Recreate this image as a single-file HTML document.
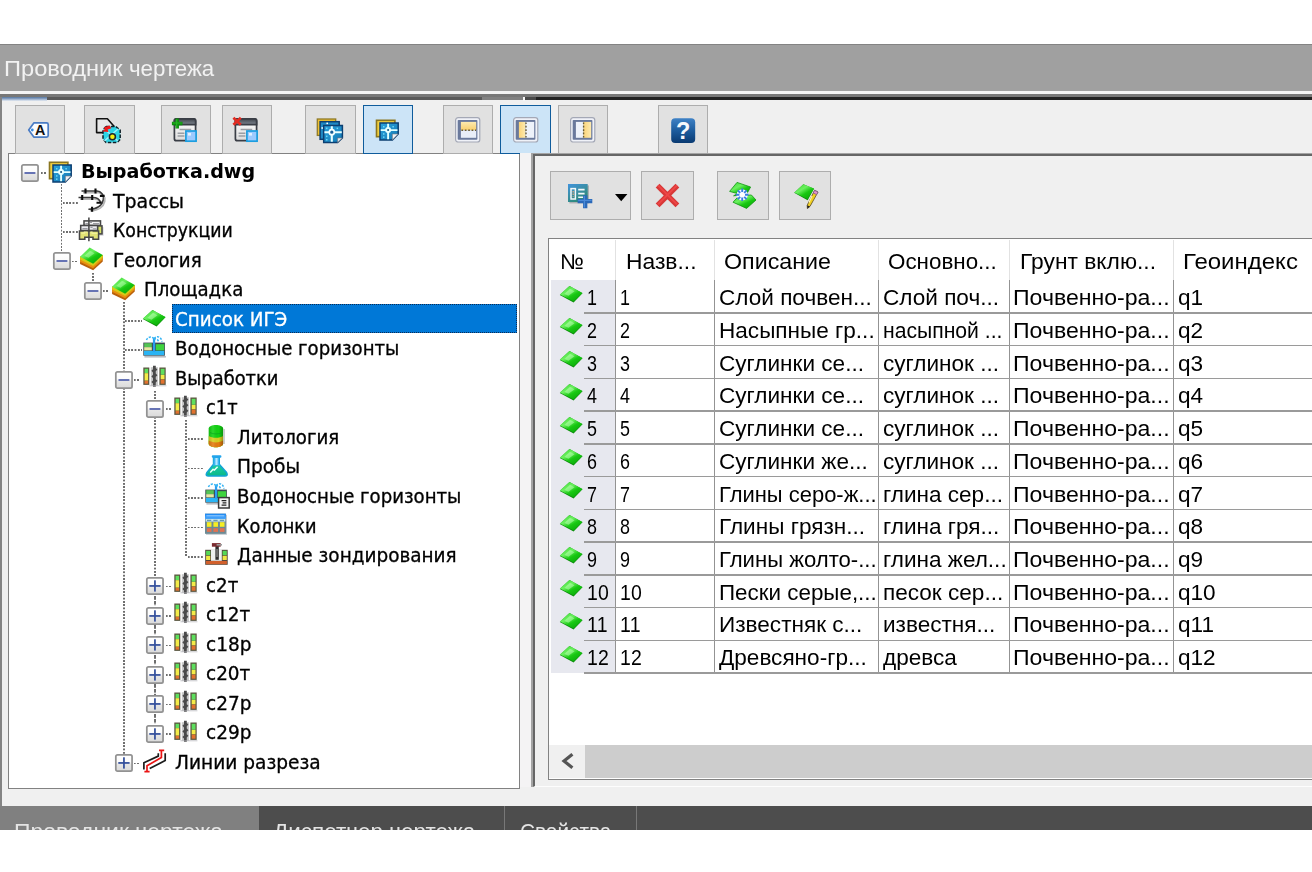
<!DOCTYPE html>
<html lang="ru"><head><meta charset="utf-8"><title>Проводник чертежа</title>
<style>
html,body{margin:0;padding:0;background:#fff;}
body{width:1312px;height:872px;overflow:hidden;position:relative;font-family:"Liberation Sans",sans-serif;}
#app{position:absolute;left:0;top:0;width:1312px;height:872px;overflow:hidden;}
.a{position:absolute;}
.ic{position:absolute;overflow:visible;}
.ph{position:absolute;background:#7a9;}
.vd2{position:absolute;background:repeating-linear-gradient(to bottom,#6e6e6e 0,#6e6e6e 3.4px,rgba(110,110,110,0) 3.9px,rgba(110,110,110,0) 4.5px,#6e6e6e 4.92px);width:1.7px;}
.t{position:absolute;white-space:nowrap;transform-origin:0 50%;line-height:1;display:block;}
.tt{font-family:"Liberation Sans",sans-serif;font-size:21.6px;color:#f2f2f2;}
.tr{font-family:"DejaVu Sans Condensed","DejaVu Sans",sans-serif;font-size:19.6px;font-stretch:condensed;color:#000;-webkit-text-stroke:0.3px currentColor;}
.trb{font-family:"DejaVu Sans Condensed","DejaVu Sans",sans-serif;font-weight:bold;font-stretch:condensed;font-size:19.6px;color:#000;}
.tb{font-family:"Liberation Sans",sans-serif;font-size:21.6px;color:#000;}
.tab{font-family:"Liberation Sans",sans-serif;font-size:21.6px;color:#e4e4e4;}
.btn{position:absolute;box-sizing:border-box;background:#e1e1e1;border:1.5px solid #adadad;}
.btn.on{background:#cce4f7;border:1.8px solid #0f5c9c;}
.hd{position:absolute;background:repeating-linear-gradient(to right,#6e6e6e 0,#6e6e6e 1.3px,rgba(110,110,110,0) 1.9px,rgba(110,110,110,0) 2.7px,#6e6e6e 3.28px);height:1.7px;}
.vd{position:absolute;background:repeating-linear-gradient(to bottom,#6e6e6e 0,#6e6e6e 1.3px,rgba(110,110,110,0) 1.9px,rgba(110,110,110,0) 2.7px,#6e6e6e 3.28px);width:1.7px;}
</style></head>
<body>
<svg width="0" height="0" style="position:absolute">
<defs>
<linearGradient id="gBox" x1="0" y1="0" x2="0" y2="1"><stop offset="0" stop-color="#ffffff"/><stop offset="0.42" stop-color="#fbfbfb"/><stop offset="0.58" stop-color="#e6e6e6"/><stop offset="1" stop-color="#dadada"/></linearGradient>
<linearGradient id="gGreen" x1="0.1" y1="0" x2="0.9" y2="1"><stop offset="0" stop-color="#38d830"/><stop offset="0.35" stop-color="#6cf060"/><stop offset="0.6" stop-color="#18c812"/><stop offset="1" stop-color="#08a008"/></linearGradient>
<linearGradient id="gHelp" x1="0" y1="0" x2="0" y2="1"><stop offset="0" stop-color="#3f82c6"/><stop offset="0.5" stop-color="#1c5c9e"/><stop offset="1" stop-color="#0a3a72"/></linearGradient>
<linearGradient id="gYel" x1="0" y1="0" x2="0" y2="1"><stop offset="0" stop-color="#fdeab0"/><stop offset="1" stop-color="#f9cf6c"/></linearGradient>
<linearGradient id="gYelH" x1="0" y1="0" x2="1" y2="0"><stop offset="0" stop-color="#fbd47a"/><stop offset="1" stop-color="#fdeab0"/></linearGradient>
<linearGradient id="gTeal" x1="0" y1="0" x2="0.6" y2="1"><stop offset="0" stop-color="#3f93dc"/><stop offset="0.5" stop-color="#3b8fa8"/><stop offset="1" stop-color="#2a8a72"/></linearGradient>
<linearGradient id="gBlueSq" x1="0" y1="0" x2="1" y2="1"><stop offset="0" stop-color="#2aa2dc"/><stop offset="1" stop-color="#1479b4"/></linearGradient>
<linearGradient id="gWinHd" x1="0" y1="0" x2="0" y2="1"><stop offset="0" stop-color="#41464e"/><stop offset="1" stop-color="#808892"/></linearGradient>
<linearGradient id="gWinBd" x1="0" y1="0" x2="0" y2="1"><stop offset="0" stop-color="#ffffff"/><stop offset="1" stop-color="#dcdcdc"/></linearGradient>
<linearGradient id="gCyl" x1="0" y1="0" x2="1" y2="0"><stop offset="0" stop-color="#000" stop-opacity="0.12"/><stop offset="0.3" stop-color="#fff" stop-opacity="0.12"/><stop offset="0.7" stop-color="#000" stop-opacity="0"/><stop offset="1" stop-color="#000" stop-opacity="0.3"/></linearGradient>
<linearGradient id="gFlask" x1="0" y1="0" x2="0" y2="1"><stop offset="0" stop-color="#20d8b8"/><stop offset="1" stop-color="#0cb888"/></linearGradient>
<linearGradient id="gColHd" x1="0" y1="0" x2="0" y2="1"><stop offset="0" stop-color="#1c86f0"/><stop offset="1" stop-color="#4aa8ff"/></linearGradient>
<filter id="soft" x="-20%" y="-20%" width="140%" height="140%"><feGaussianBlur stdDeviation="0.45"/></filter>

<!-- expand boxes 17x17 -->
<symbol overflow="visible" id="bx-minus" viewBox="0 0 17.4 17.4"><rect x="0.8" y="0.8" width="15.8" height="15.8" rx="1.6" fill="url(#gBox)" stroke="#929292" stroke-width="1.7"/><rect x="3.4" y="7.9" width="10.6" height="1.7" fill="#5362ac"/></symbol>
<symbol overflow="visible" id="bx-plus" viewBox="0 0 17.4 17.4"><rect x="0.8" y="0.8" width="15.8" height="15.8" rx="1.6" fill="url(#gBox)" stroke="#929292" stroke-width="1.7"/><rect x="3.2" y="7.85" width="11" height="1.7" fill="#34509c"/><rect x="7.85" y="3.2" width="1.7" height="11" fill="#34509c"/></symbol>

<!-- dwg icon, px units -->
<symbol overflow="visible" id="i-dwg" viewBox="0 0 26.24 26.24">
<rect x="1.5" y="2.3" width="18.4" height="16.4" fill="#f2d040" stroke="#8a7620" stroke-width="1.6"/>
<path d="M5 5.1 H23.2 V16 L17.4 21.9 H5 Z" fill="url(#gBlueSq)" stroke="#0c3f72" stroke-width="1.5"/>
<path d="M17.4 21.9 V16 H23.2 Z" fill="#eef1f5" stroke="#70767e" stroke-width="0.6"/>
<path d="M13.1 5.8 V21.2 M5.7 12.1 H22.5" stroke="#e0ffff" stroke-width="1.9"/>
<circle cx="13.1" cy="12.1" r="2.2" fill="#dff" stroke="#e8ffff" stroke-width="1.6"/><circle cx="13.1" cy="12.1" r="1" fill="#14507e"/>
<g fill="#6fd8f8"><rect x="8" y="8" width="1.5" height="1.5"/><rect x="17.4" y="8" width="1.5" height="1.5"/><rect x="8" y="15.2" width="1.5" height="1.5"/><rect x="8" y="18.4" width="1.5" height="1.5"/></g>
</symbol>

<symbol overflow="visible" id="i-diamond" viewBox="0 0 26.24 26.24">
<path d="M0.8 12 L10.5 3 L23.5 10.3 L14.6 19.5 Z" fill="#0a8a0a"/>
<path d="M0.9 11.6 L10.5 3 L23.5 10 L14.7 18.4 Z" fill="url(#gGreen)"/>
<path d="M5.5 11 L11 5.8 L15.5 8.2 L9.5 12.8 Z" fill="#b8ffb0" opacity="0.55" filter="url(#soft)"/>
</symbol>

<symbol overflow="visible" id="i-geo" viewBox="0 0 26.24 26.24">
<path d="M1.06 8.8 V15.9 L14.16 22.3 L23.76 13.5 V7.1 Z" fill="#b8600c"/>
<path d="M1.06 8.8 V13.8 L14.16 20.2 L23.76 11.6 V7.1 Z" fill="#e8900e"/>
<path d="M1.06 8.8 V11.5 L14.16 17.9 L23.76 9.4 V7.1 Z" fill="#d4cc18"/>
<path d="M1.06 8.8 L10.66 -0.5 L23.76 7.1 L14.16 15.7 Z" fill="url(#gGreen)"/>
<path d="M5.5 8 L11 2.8 L15.5 5.2 L9.5 9.8 Z" fill="#b8ffb0" opacity="0.5" filter="url(#soft)"/>
</symbol>

<symbol overflow="visible" id="i-trass" viewBox="0 0 26.24 26.24">
<g fill="none" stroke="#a8a8a8" stroke-width="1.7" transform="translate(1.5,1.5)" opacity="0.85">
<path d="M18 2.05 C22 2.2 25.4 6 24.2 11 C23.2 15.5 19 20.25 9.4 20.25"/><path d="M13.9 8.55 C17.5 8.6 20.5 10.5 21.5 13.35"/><path d="M2.5 2.05 H18 M-0.5 8.55 H13.9"/>
</g>
<g fill="none" stroke="#3c3c3c" stroke-width="1.5">
<path d="M2.5 2.05 H18 C22 2.2 25.4 6 24.2 11 C23.2 15.5 19 20.25 9.4 20.25"/>
<path d="M-0.5 8.55 H13.9 C17.5 8.6 20.5 10.5 21.5 13.35"/>
</g>
<g fill="none" stroke="#0c0c0c" stroke-width="2.1">
<path d="M6.5 -0.4 V4.6 M16.5 -0.4 V4.6 M3.2 6.1 V11.1 M13.2 6.1 V11.1 M13.1 17.7 V22.7 M20.9 6.85 H25.6 M17.5 13.75 H22.5"/>
</g>
</symbol>

<symbol overflow="visible" id="i-constr" viewBox="0 0 26.24 26.24">
<rect x="20.6" y="8.2" width="4" height="8.6" fill="#a8a8b4" opacity="0.45"/>
<g stroke="#474747" stroke-width="1.55">
<rect x="5" y="1.9" width="16.5" height="4.6" fill="#f2f2f2"/>
<rect x="1.7" y="6.5" width="17" height="5" fill="#ececf0"/>
<rect x="18.7" y="6.9" width="4.3" height="8" fill="#d6e06a"/>
<path d="M0.5 12 H19.6 V20.2 H14 V18.2 H5.8 V20.2 H0.5 Z" fill="#e2e274"/>
<path d="M9.9 -1.6 V22.2" fill="none"/>
</g>
<path d="M6.4 4.6 H9 M11 3.4 H13 M14 4.6 H20 M3.4 9.6 H8.6 M11.4 8.4 H13.6 M13.8 9.8 H17.4" stroke="#9a9aa0" stroke-width="1.3"/>
<path d="M2.2 14.2 H5.4 V13.2 H8.6 M11.4 13.2 H13 V14.4 H18.4" stroke="#f0f09a" stroke-width="1.2" fill="none"/>
</symbol>

<symbol overflow="visible" id="i-water" viewBox="0 0 26.24 26.24">
<rect x="2.4" y="19" width="21.5" height="1.6" fill="#9aa0a8" opacity="0.7"/>
<rect x="1.3" y="5.6" width="21.6" height="13.1" fill="#3c4a52"/>
<rect x="2.2" y="6.2" width="7.6" height="4" fill="#54c454"/><rect x="2.2" y="10.2" width="7.6" height="3.2" fill="#e6e8a0"/>
<rect x="13.8" y="7.2" width="8.4" height="6.2" fill="#3ed43e"/>
<rect x="2" y="13.9" width="20.2" height="4.2" fill="#2ab4f4"/>
<rect x="10.9" y="1.2" width="2.3" height="13.5" fill="#2a9cf0"/>
<g fill="none" stroke="#36b4f4" stroke-width="1.5" stroke-dasharray="2.2 1.3">
<path d="M12 1.6 C9 -1.4 5 0.4 4.2 3.8"/><path d="M12 1.6 C15 -2 19.5 0 20 4.6"/><path d="M12 2.6 C13.6 1 16 2 16.4 4.4"/>
</g>
</symbol>

<symbol overflow="visible" id="i-water2" viewBox="0 0 26.24 26.24">
<use href="#i-water"/>
<rect x="14.6" y="13.6" width="10.6" height="10.4" fill="#f4f4f4" stroke="#3a3a3a" stroke-width="1.5"/>
<path d="M17.6 16.6 H22.4 M18.6 18.9 H22.4 M17.6 21.2 H22.4" stroke="#222" stroke-width="1.3"/>
</symbol>

<symbol overflow="visible" id="i-bore" viewBox="0 0 26.24 26.24">
<rect x="1.3" y="1.5" width="6" height="17.4" fill="#5a5640"/>
<rect x="2.6" y="2.8" width="3.5" height="4.2" fill="#5ee05e"/><rect x="2.6" y="7.2" width="3.5" height="7.4" fill="#f4ec48"/><rect x="2.6" y="14.8" width="3.5" height="2.9" fill="#e2722e"/>
<rect x="17.4" y="1.5" width="6.3" height="17.4" fill="#5a5640"/>
<rect x="18.7" y="2.8" width="3.8" height="5.9" fill="#5ee05e"/><rect x="18.7" y="8.9" width="3.8" height="4.4" fill="#f4ec48"/><rect x="18.7" y="13.6" width="3.8" height="4.1" fill="#e2722e"/>
<rect x="8.8" y="1.2" width="2.3" height="18.6" fill="#c8c8c8"/><rect x="13.6" y="1.2" width="2.3" height="18.6" fill="#c8c8c8"/>
<path d="M11 -0.2 H13.8 V2 L15.4 3.6 L13.8 5.2 V7.6 L15.4 9.2 L13.8 10.8 V13.2 L15.4 14.8 L13.8 16.4 V20.8 H11 V17.6 L9.4 16 L11 14.4 V12 L9.4 10.4 L11 8.8 V6.4 L9.4 4.8 L11 3.2 Z" fill="#4a4a4a"/>
<rect x="7.4" y="19" width="17" height="1.4" fill="#b0b0b6" opacity="0.5"/>
</symbol>

<symbol overflow="visible" id="i-litho" viewBox="0 0 26.24 26.24">
<path d="M4.7 3.6 C4.7 -1.2 19.1 -1.2 19.1 3.6 V18.8 C19.1 23.4 4.7 23.4 4.7 18.8 Z" fill="#12d212"/>
<path d="M4.7 11 C8 13.4 16 13.4 19.1 11 V18.8 C19.1 23.4 4.7 23.4 4.7 18.8 Z" fill="#d6d020"/>
<path d="M4.7 15.6 C8 18 16 18 19.1 15.6 V18.8 C19.1 23.4 4.7 23.4 4.7 18.8 Z" fill="#e47c10"/>
<path d="M4.7 3.6 C4.7 -1.2 19.1 -1.2 19.1 3.6 V18.8 C19.1 23.4 4.7 23.4 4.7 18.8 Z" fill="url(#gCyl)"/>
<path d="M6 7.6 C9 9.4 15 9.4 18 7.6" fill="none" stroke="#0a9a20" stroke-width="1" opacity="0.6"/>
<rect x="19.3" y="4" width="1.6" height="15" fill="#9a9aa0" opacity="0.55"/>
</symbol>

<symbol overflow="visible" id="i-flask" viewBox="0 0 26.24 26.24">
<path d="M9.6 2.6 H15.2 V9.2 L22.6 17.6 C24 20 22.6 21 21 21 H4.4 C2.6 21 1.6 20 2.8 17.8 L9.6 9.2 Z" fill="url(#gFlask)" stroke="#12a4d4" stroke-width="1.6" stroke-linejoin="round"/>
<path d="M9.6 2.6 H15.2 V9.2 L16.4 10.6 H8.6 L9.6 9.2 Z" fill="#3cb4f4"/>
<rect x="11.4" y="3" width="2.2" height="7" fill="#b4e8ff"/>
<rect x="7.8" y="0.2" width="9.6" height="2.6" rx="1" fill="#22a4ec"/>
<path d="M6.2 17.4 L9 14.4 L10.4 15 L13.6 11.8" fill="none" stroke="#e8fffa" stroke-width="1.5"/>
</symbol>

<symbol overflow="visible" id="i-columns" viewBox="0 0 26.24 26.24">
<rect x="2" y="0.8" width="21" height="20" fill="#9aa4ac" opacity="0.6"/>
<rect x="1" y="-0.3" width="20.9" height="20.1" fill="#6c8a94"/>
<rect x="1" y="-0.3" width="20.9" height="5.2" fill="url(#gColHd)"/>
<rect x="2.4" y="1.2" width="18" height="1.2" fill="#8cc8ff"/>
<rect x="1.6" y="5" width="19.7" height="2.6" fill="#c8e4ee"/>
<path d="M3 6.3 H7.2 M9.4 6.3 H13.6 M15.8 6.3 H20" stroke="#6a9aa8" stroke-width="1.2"/>
<g fill="#f6ee24"><rect x="2.9" y="8.2" width="4.6" height="4.6"/><rect x="9.4" y="8.2" width="4.6" height="4.6"/><rect x="15.9" y="8.2" width="4.6" height="4.6"/></g>
<g fill="#e07252"><rect x="2.9" y="14.2" width="4.6" height="3.7"/><rect x="9.4" y="14.2" width="4.6" height="3.7"/><rect x="15.9" y="14.2" width="4.6" height="3.7"/></g>
</symbol>

<symbol overflow="visible" id="i-sond" viewBox="0 0 26.24 26.24">
<rect x="1.2" y="6.8" width="22.5" height="15" fill="#54463c"/>
<rect x="7" y="6.2" width="10.8" height="11.6" fill="#eef0f0"/>
<rect x="2.1" y="7.8" width="4.2" height="4.4" fill="#56d856"/><rect x="2.1" y="12.8" width="4.2" height="4.2" fill="#f0e844"/>
<rect x="18.6" y="7.8" width="4.2" height="4.4" fill="#56d856"/><rect x="18.6" y="12.8" width="4.2" height="4.2" fill="#f0e844"/>
<rect x="2" y="18" width="20.9" height="3.2" fill="#d2602c"/>
<rect x="11.4" y="1.8" width="3.4" height="15" fill="#2e2e2e"/><rect x="12.4" y="6" width="1.3" height="8" fill="#8a8a8a"/>
<rect x="7.9" y="0.1" width="8.8" height="3.6" fill="#7c2c30"/><rect x="12.6" y="1" width="5.4" height="1.6" fill="#9a9a9a"/>
</symbol>

<symbol overflow="visible" id="i-section" viewBox="0 0 26.24 26.24">
<g fill="none" stroke="#1c1c1c" stroke-width="1.7"><path d="M1.9 19.4 V12.7 L16.3 6.1 V3.2"/><path d="M7.7 18.5 L23.2 10.6 V3.2"/></g>
<g fill="none" stroke="#ea1414" stroke-width="1.7"><path d="M2.4 21.6 H7.6 M5 21.6 V15.8 L19.4 7.5 V0.3 M17 0.3 H22.2"/></g>
</symbol>

<!-- toolbar icons -->

<symbol overflow="visible" id="t2" viewBox="0 0 26.24 26.24">
<path d="M0.6 1.8 H11.4 L18 9.2 V15.6 H0.6 Z" fill="#e8e8e8" stroke="#111" stroke-width="1.6" stroke-linejoin="round"/>
<path d="M10 9.4 H19.5 L24.2 13 V22.5 L21 25.4 H10 L7 22 V13 Z" fill="#2cd4e6" stroke="#102028" stroke-width="1.5" stroke-dasharray="3.4 1.6"/>
<path d="M8.5 12 L22 24 M22 12 L8.5 24" stroke="#9af2fa" stroke-width="1.6"/>
<circle cx="16.4" cy="19.7" r="3" fill="#f4f010" stroke="#20282c" stroke-width="1.5"/>
<path d="M13.6 8.4 L15.4 11.2 L11.6 12.4 L12.4 15 L6.6 14.6 L8.8 12 L7.8 10.6 Z" fill="#f01818"/>
</symbol>

<symbol overflow="visible" id="t-win" viewBox="0 0 26.24 26.24">
<rect x="1.4" y="1.9" width="21.2" height="21.8" rx="2" fill="url(#gWinBd)" stroke="#3a3e46" stroke-width="1.7"/>
<path d="M1.4 7.7 V3.9 Q1.4 1.9 3.4 1.9 H20.6 Q22.6 1.9 22.6 3.9 V7.7 Z" fill="url(#gWinHd)" stroke="#3a3e46" stroke-width="1.7"/>
<path d="M6.6 12.4 H18.2 M4.6 16.3 H11.4 M4.6 19 H11.4" stroke="#9a9ea4" stroke-width="1.5"/>
<rect x="12.9" y="14" width="10.2" height="10.2" fill="#9ccaff" stroke="#1c9ee0" stroke-width="1.7"/>
<rect x="15" y="16" width="3" height="2.6" fill="#e0f0ff"/>
</symbol>
<symbol overflow="visible" id="t3" viewBox="0 0 26.24 26.24"><use href="#t-win"/>
<path d="M-1.1 6.6 H9.5 M4.2 1.6 V11.6" stroke="#0c8c0c" stroke-width="3.5"/><path d="M-0.5 6 H8.9 M3.7 2.2 V11" stroke="#26b426" stroke-width="1.2"/>
</symbol>
<symbol overflow="visible" id="t4" viewBox="0 0 26.24 26.24"><use href="#t-win"/>
<path d="M-0.6 0.8 L6.8 7.8 M6.8 0.8 L-0.6 7.8" stroke="#e22c22" stroke-width="2.7"/>
</symbol>

<symbol overflow="visible" id="t5" viewBox="0 0 28 26.24">
<rect x="1.3" y="1" width="18.4" height="16.4" fill="#f0c030" stroke="#8f7a28" stroke-width="1.3"/>
<rect x="4.1" y="3.7" width="19.1" height="17.6" fill="#1f8ac4" stroke="#0c3f72" stroke-width="1.5"/>
<rect x="5.4" y="9.2" width="1.6" height="1.6" fill="#fff"/><rect x="10.4" y="4.6" width="1.6" height="1.6" fill="#fff"/>
<path d="M7.7 7.5 H26.4 V20 L21.6 24.4 H7.7 Z" fill="url(#gBlueSq)" stroke="#0c3f72" stroke-width="1.5"/>
<path d="M21.6 24.4 V20 H26.4 Z" fill="#e4e8ee" stroke="#70767e" stroke-width="0.6"/>
<path d="M15.8 8.2 V23.8 M8.4 14.2 H25.8" stroke="#e8ffff" stroke-width="2.1"/>
<circle cx="15.8" cy="14.2" r="2.5" fill="#1a5f98" stroke="#f4ffff" stroke-width="1.7"/>
<g fill="#6fd8f8"><rect x="10" y="9.6" width="1.5" height="1.5"/><rect x="20.6" y="9.6" width="1.5" height="1.5"/><rect x="10" y="17.6" width="1.5" height="1.5"/><rect x="10" y="21" width="1.5" height="1.5"/></g>
</symbol>

<symbol overflow="visible" id="t-lay" viewBox="0 0 25.4 25.6">
<rect x="0.6" y="0.6" width="24.2" height="24.4" rx="2.6" fill="#f0f2f8" stroke="#a4a8b6" stroke-width="1.2"/>
<rect x="2.7" y="3" width="19.7" height="19.7" rx="0.8" fill="#6a799c"/>
</symbol>
<symbol overflow="visible" id="t7" viewBox="0 0 25.4 25.6"><use href="#t-lay"/>
<rect x="5.9" y="4.9" width="15.3" height="8.3" fill="url(#gYel)"/><rect x="5.9" y="13.2" width="15.3" height="7.6" fill="#e9eef8"/>
<path d="M6.4 13.3 H21" stroke="#6a5c34" stroke-width="1.4" stroke-dasharray="1.7 1.7"/>
</symbol>
<symbol overflow="visible" id="t8" viewBox="0 0 25.4 25.6"><use href="#t-lay"/>
<rect x="5.9" y="4.9" width="6.6" height="15.9" fill="url(#gYelH)"/><rect x="12.5" y="4.9" width="8.7" height="15.9" fill="#eef2fa"/>
<path d="M13 5.4 V20.6" stroke="#6a5c34" stroke-width="1.4" stroke-dasharray="1.7 1.7"/>
</symbol>
<symbol overflow="visible" id="t9" viewBox="0 0 25.4 25.6"><use href="#t-lay"/>
<rect x="5.9" y="4.9" width="7.6" height="15.9" fill="#eef2fa"/><rect x="13.5" y="4.9" width="7.7" height="15.9" fill="url(#gYelH)"/>
<path d="M13.6 5.4 V20.6" stroke="#6a5c34" stroke-width="1.4" stroke-dasharray="1.7 1.7"/>
</symbol>


<symbol overflow="visible" id="r1" viewBox="0 0 26 26">
<rect x="1.4" y="1.4" width="19.6" height="18" fill="#7a8088" opacity="0.5"/>
<rect x="0" y="0" width="19.7" height="18" fill="url(#gTeal)"/>
<rect x="3" y="4.6" width="4.4" height="10.4" fill="none" stroke="#f2f8fa" stroke-width="1.5"/>
<path d="M5.2 7 V13" stroke="#e8a878" stroke-width="1.2" stroke-dasharray="1.4 1.2"/>
<path d="M10.2 5.6 H16.6 M10.2 9.6 H16.6 M10.2 13.2 H16.6" stroke="#f2f8fa" stroke-width="1.6"/>
<path d="M9.6 17.2 H24.3 M17.2 11.3 V24.3" stroke="#2a68b8" stroke-width="4.3"/>
<path d="M10.2 16.4 H23.6 M16.4 12 V23.6" stroke="#4a8ad8" stroke-width="1.3"/>
</symbol>

<symbol overflow="visible" id="r2" viewBox="0 0 23 23">
<path d="M1.6 1.6 L21.4 21.4 M21.4 1.6 L1.6 21.4" stroke="#d83838" stroke-width="5.4"/>
<path d="M2 1.4 L21 20.4 M21 1.4 L2 20.4" stroke="#ee4646" stroke-width="2"/>
</symbol>

<symbol overflow="visible" id="r3" viewBox="0 0 27 27">
<path d="M0.6 9.4 L8 0.4 L21.6 5 L17.4 12.6 L4.6 13.8 L8.6 11.6 Z" fill="url(#gGreen)" stroke="#0e960e" stroke-width="0.8"/>
<path d="M4 20.2 L10.2 13.6 L22.4 13 L27 18 L17.6 26.4 Z" fill="url(#gGreen)" stroke="#0e960e" stroke-width="0.8"/>
<circle cx="13.2" cy="12.8" r="5.6" fill="#f4fbff"/>
<g stroke="#3a7ce4" stroke-width="1.9"><path d="M13.2 6.6 V10 M13.2 15.6 V19 M7 12.8 H10.4 M16 12.8 H19.4 M8.8 8.4 L11.2 10.8 M15.2 14.8 L17.6 17.2 M17.6 8.4 L15.2 10.8 M11.2 14.8 L8.8 17.2"/></g>
<circle cx="13.2" cy="12.8" r="2.2" fill="#ffffff"/>
</symbol>

<symbol overflow="visible" id="r4" viewBox="0 0 26 26">
<path d="M0.2 8.8 L9.4 0.2 L20 4.8 L13.6 16.2 Z" fill="#0a8a0a"/>
<path d="M0.4 8.4 L9.4 0.2 L20 4.6 L13.6 15.2 Z" fill="url(#gGreen)"/>
<path d="M20.6 6.4 L24 8 L16 22.4 L13.4 24.6 L13.2 21.2 Z" fill="#f2d020" stroke="#6a5a30" stroke-width="0.9"/>
<path d="M20.6 6.4 L24 8 L22.6 10.6 L19.2 9 Z" fill="#e690cc" stroke="#7a5a8a" stroke-width="0.8"/>
<path d="M13.2 21.2 L16 22.4 L13.4 24.6 Z" fill="#222"/>
<path d="M18 12 L15 18.6" stroke="#fff8b0" stroke-width="1.1"/>
</symbol>
</defs>
</svg>

<div id="app">
<div class="a" style="left:0;top:44.3px;width:1312px;height:785.5px;background:#f0f0f0"></div>
<div class="a" style="left:0;top:44.3px;width:1312px;height:47.2px;background:#a0a0a0;border-top:1.9px solid #838383;box-sizing:border-box"></div>
<span id="title" class="t tt" style="left:3.6px;top:57.83px;transform:scaleX(1.0944);">Проводник</span>
<span id="title2" class="t tt" style="left:129.2px;top:57.83px;transform:scaleX(1.0313);">чертежа</span>
<div class="a" style="left:0;top:91.4px;width:1312px;height:2.8px;background:#f4f4f4"></div>
<div class="a" style="left:0;top:94.1px;width:1312px;height:2.8px;background:#787878"></div>
<div class="a" style="left:0;top:96.8px;width:1312px;height:3.1px;background:#5a5a5a"></div>
<div class="a" style="left:1.5px;top:96.6px;width:45.5px;height:4.4px;background:linear-gradient(#57779f,#8aa2c4 45%,#e6ecf3)"></div>
<div class="a" style="left:482px;top:96.8px;width:41.5px;height:3.1px;background:#828282"></div>
<div class="a" style="left:523.2px;top:96.6px;width:1.7px;height:4.4px;background:#f6f6f6"></div>
<div class="a" style="left:525px;top:96.8px;width:11px;height:3.1px;background:#4a4a4a"></div>
<div class="a" style="left:536px;top:96.8px;width:776px;height:3.1px;background:#222"></div>
<div class="a" style="left:0;top:97px;width:1.6px;height:709px;background:#848484"></div>
<div class="a" style="left:8.2px;top:152.8px;width:512.1px;height:636px;box-sizing:border-box;background:#fff;border:1.9px solid #828282"></div>
<div class="btn" style="left:15.2px;top:105.4px;width:50.3px;height:48.9px"></div>
<svg class="ic" style="left:27.23px;top:116.7px" width="26.24" height="26.24" viewBox="0 0 26.24 26.24"><path d="M1.7 13 L6.8 5.9 H19.6 Q21.2 5.9 21.2 7.5 V18.5 Q21.2 20.1 19.6 20.1 H6.8 Z" fill="#fafcff" stroke="#4a7cc4" stroke-width="1.7" stroke-linejoin="round"/>
<circle cx="5.3" cy="13" r="1.4" fill="#3a8adc"/>
<text x="13.3" y="18.3" text-anchor="middle" font-family="Liberation Sans, sans-serif" font-weight="bold" font-size="14.4" fill="#111">A</text></svg>
<div class="btn" style="left:84.3px;top:105.4px;width:50.3px;height:48.9px"></div>
<svg class="ic" style="left:96.33px;top:116.7px" width="26.24" height="26.24" ><use href="#t2"/></svg>
<div class="btn" style="left:161px;top:105.4px;width:50.3px;height:48.9px"></div>
<svg class="ic" style="left:173.03px;top:116.7px" width="26.24" height="26.24" ><use href="#t3"/></svg>
<div class="btn" style="left:221.8px;top:105.4px;width:50.3px;height:48.9px"></div>
<svg class="ic" style="left:233.83px;top:116.7px" width="26.24" height="26.24" ><use href="#t4"/></svg>
<div class="btn" style="left:305.3px;top:105.4px;width:50.3px;height:48.9px"></div>
<svg class="ic" style="left:316px;top:118px" width="28" height="26.24" ><use href="#t5"/></svg>
<div class="btn on" style="left:362.5px;top:105.4px;width:50.3px;height:48.9px"></div>
<svg class="ic" style="left:374.9px;top:117.6px" width="26.24" height="26.24" ><use href="#i-dwg"/></svg>
<div class="btn" style="left:443px;top:105.4px;width:50.3px;height:48.9px"></div>
<svg class="ic" style="left:454.9px;top:117.1px" width="25.4" height="25.6" ><use href="#t7"/></svg>
<div class="btn on" style="left:500.3px;top:105.4px;width:50.3px;height:48.9px"></div>
<svg class="ic" style="left:512.7px;top:117.1px" width="25.4" height="25.6" ><use href="#t8"/></svg>
<div class="btn" style="left:558px;top:105.4px;width:50.3px;height:48.9px"></div>
<svg class="ic" style="left:569.6px;top:117.1px" width="25.4" height="25.6" ><use href="#t9"/></svg>
<div class="btn" style="left:657.8px;top:105.4px;width:50.3px;height:48.9px"></div>
<svg class="ic" style="left:670.9px;top:118px" width="24.4" height="25.2" viewBox="0 0 24.4 25.2"><rect x="0.2" y="0.2" width="24" height="24.8" rx="4" fill="url(#gHelp)"/>
<text x="12.2" y="21.2" text-anchor="middle" font-family="Liberation Sans, sans-serif" font-weight="bold" font-size="23.5" fill="#f6f8fc">?</text></svg>
<div class="vd" style="left:60.75px;top:184.25px;height:68.56px"></div>
<div class="vd" style="left:91.90px;top:272.81px;height:9.52px"></div>
<div class="vd" style="left:123.05px;top:302.33px;height:68.56px"></div>
<div class="vd" style="left:123.05px;top:387.89px;height:366.76px"></div>
<div class="vd" style="left:154.20px;top:390.89px;height:9.52px"></div>
<div class="vd" style="left:154.20px;top:417.41px;height:160.12px"></div>
<div class="vd2" style="left:154.05px;top:595.63px;height:10.32px"></div>
<div class="vd2" style="left:154.05px;top:625.15px;height:10.32px"></div>
<div class="vd2" style="left:154.05px;top:654.67px;height:10.32px"></div>
<div class="vd2" style="left:154.05px;top:684.19px;height:10.32px"></div>
<div class="vd2" style="left:154.05px;top:713.71px;height:10.32px"></div>
<div class="vd" style="left:185.35px;top:420.41px;height:136.10px"></div>
<svg class="ic" style="left:21.35px;top:163.9px" width="17.9" height="17.9" ><use href="#bx-minus"/></svg>
<div class="hd" style="left:40.90px;top:172.25px;width:5.6px"></div>
<svg class="ic" style="left:48.34px;top:159.63px" width="26.24" height="26.24" ><use href="#i-dwg"/></svg>
<span id="tr0" class="t trb" style="left:80.6px;top:162.27px;transform:scaleX(1.0845);">Выработка.dwg</span>
<div class="hd" style="left:62.95px;top:201.87px;width:16.5px"></div>
<svg class="ic" style="left:79.49px;top:189.15px" width="26.24" height="26.24" ><use href="#i-trass"/></svg>
<span id="tr1" class="t tr" style="left:112.75px;top:191.79px;transform:scaleX(1.0758);">Трассы</span>
<div class="hd" style="left:62.95px;top:231.39px;width:16.5px"></div>
<svg class="ic" style="left:79.49px;top:218.67px" width="26.24" height="26.24" ><use href="#i-constr"/></svg>
<span id="tr2" class="t tr" style="left:112.75px;top:221.31px;transform:scaleX(0.9828);">Конструкции</span>
<svg class="ic" style="left:52.5px;top:252.46px" width="17.9" height="17.9" ><use href="#bx-minus"/></svg>
<div class="hd" style="left:72.05px;top:260.81px;width:5.6px"></div>
<svg class="ic" style="left:79.49px;top:248.19px" width="26.24" height="26.24" ><use href="#i-geo"/></svg>
<span id="tr3" class="t tr" style="left:112.75px;top:250.83px;transform:scaleX(1.0337);">Геология</span>
<svg class="ic" style="left:83.65px;top:281.98px" width="17.9" height="17.9" ><use href="#bx-minus"/></svg>
<div class="hd" style="left:103.20px;top:290.33px;width:5.6px"></div>
<svg class="ic" style="left:110.64px;top:277.71px" width="26.24" height="26.24" ><use href="#i-geo"/></svg>
<span id="tr4" class="t tr" style="left:143.9px;top:280.35px;transform:scaleX(1.0302);">Площадка</span>
<div class="hd" style="left:125.25px;top:319.95px;width:16.5px"></div>
<svg class="ic" style="left:141.79px;top:307.23px" width="26.24" height="26.24" ><use href="#i-diamond"/></svg>
<div class="a" style="left:172px;top:304.3px;width:344.6px;height:28.8px;box-sizing:border-box;background:#0078d7;border:1.5px dotted #0b2c55"></div>
<span id="tr5" class="t tr" style="left:175.05px;top:309.87px;transform:scaleX(1.0380);color:#fff;">Список ИГЭ</span>
<div class="hd" style="left:125.25px;top:349.47px;width:16.5px"></div>
<svg class="ic" style="left:141.79px;top:336.75px" width="26.24" height="26.24" ><use href="#i-water"/></svg>
<span id="tr6" class="t tr" style="left:175.05px;top:339.39px;transform:scaleX(1.0280);">Водоносные горизонты</span>
<svg class="ic" style="left:114.8px;top:370.54px" width="17.9" height="17.9" ><use href="#bx-minus"/></svg>
<div class="hd" style="left:134.35px;top:378.89px;width:5.6px"></div>
<svg class="ic" style="left:141.79px;top:366.27px" width="26.24" height="26.24" ><use href="#i-bore"/></svg>
<span id="tr7" class="t tr" style="left:175.05px;top:368.91px;transform:scaleX(1.0137);">Выработки</span>
<svg class="ic" style="left:145.95px;top:400.06px" width="17.9" height="17.9" ><use href="#bx-minus"/></svg>
<div class="hd" style="left:165.50px;top:408.41px;width:5.6px"></div>
<svg class="ic" style="left:172.94px;top:395.79px" width="26.24" height="26.24" ><use href="#i-bore"/></svg>
<span id="tr8" class="t tr" style="left:206.2px;top:398.43px;transform:scaleX(1.0129);">с1т</span>
<div class="hd" style="left:187.55px;top:438.03px;width:16.5px"></div>
<svg class="ic" style="left:204.09px;top:425.31px" width="26.24" height="26.24" ><use href="#i-litho"/></svg>
<span id="tr9" class="t tr" style="left:237.35px;top:427.95px;transform:scaleX(1.0313);">Литология</span>
<div class="hd" style="left:187.55px;top:467.55px;width:16.5px"></div>
<svg class="ic" style="left:204.09px;top:454.83px" width="26.24" height="26.24" ><use href="#i-flask"/></svg>
<span id="tr10" class="t tr" style="left:237.35px;top:457.47px;transform:scaleX(1.0517);">Пробы</span>
<div class="hd" style="left:187.55px;top:497.07px;width:16.5px"></div>
<svg class="ic" style="left:204.09px;top:484.35px" width="26.24" height="26.24" ><use href="#i-water2"/></svg>
<span id="tr11" class="t tr" style="left:237.35px;top:486.99px;transform:scaleX(1.0280);">Водоносные горизонты</span>
<div class="hd" style="left:187.55px;top:526.59px;width:16.5px"></div>
<svg class="ic" style="left:204.09px;top:513.87px" width="26.24" height="26.24" ><use href="#i-columns"/></svg>
<span id="tr12" class="t tr" style="left:237.35px;top:516.51px;transform:scaleX(1.0076);">Колонки</span>
<div class="hd" style="left:187.55px;top:556.11px;width:16.5px"></div>
<svg class="ic" style="left:204.09px;top:543.39px" width="26.24" height="26.24" ><use href="#i-sond"/></svg>
<span id="tr13" class="t tr" style="left:237.35px;top:546.03px;transform:scaleX(1.0457);">Данные зондирования</span>
<svg class="ic" style="left:145.95px;top:577.18px" width="17.9" height="17.9" ><use href="#bx-plus"/></svg>
<div class="hd" style="left:165.50px;top:585.53px;width:5.6px"></div>
<svg class="ic" style="left:172.94px;top:572.91px" width="26.24" height="26.24" ><use href="#i-bore"/></svg>
<span id="tr14" class="t tr" style="left:206.2px;top:575.55px;transform:scaleX(1.0355);">с2т</span>
<svg class="ic" style="left:145.95px;top:606.7px" width="17.9" height="17.9" ><use href="#bx-plus"/></svg>
<div class="hd" style="left:165.50px;top:615.05px;width:5.6px"></div>
<svg class="ic" style="left:172.94px;top:602.43px" width="26.24" height="26.24" ><use href="#i-bore"/></svg>
<span id="tr15" class="t tr" style="left:206.2px;top:605.07px;transform:scaleX(1.0452);">с12т</span>
<svg class="ic" style="left:145.95px;top:636.22px" width="17.9" height="17.9" ><use href="#bx-plus"/></svg>
<div class="hd" style="left:165.50px;top:644.57px;width:5.6px"></div>
<svg class="ic" style="left:172.94px;top:631.95px" width="26.24" height="26.24" ><use href="#i-bore"/></svg>
<span id="tr16" class="t tr" style="left:206.2px;top:634.59px;transform:scaleX(1.0488);">с18р</span>
<svg class="ic" style="left:145.95px;top:665.74px" width="17.9" height="17.9" ><use href="#bx-plus"/></svg>
<div class="hd" style="left:165.50px;top:674.09px;width:5.6px"></div>
<svg class="ic" style="left:172.94px;top:661.47px" width="26.24" height="26.24" ><use href="#i-bore"/></svg>
<span id="tr17" class="t tr" style="left:206.2px;top:664.11px;transform:scaleX(1.0452);">с20т</span>
<svg class="ic" style="left:145.95px;top:695.26px" width="17.9" height="17.9" ><use href="#bx-plus"/></svg>
<div class="hd" style="left:165.50px;top:703.61px;width:5.6px"></div>
<svg class="ic" style="left:172.94px;top:690.99px" width="26.24" height="26.24" ><use href="#i-bore"/></svg>
<span id="tr18" class="t tr" style="left:206.2px;top:693.63px;transform:scaleX(1.0488);">с27р</span>
<svg class="ic" style="left:145.95px;top:724.78px" width="17.9" height="17.9" ><use href="#bx-plus"/></svg>
<div class="hd" style="left:165.50px;top:733.13px;width:5.6px"></div>
<svg class="ic" style="left:172.94px;top:720.51px" width="26.24" height="26.24" ><use href="#i-bore"/></svg>
<span id="tr19" class="t tr" style="left:206.2px;top:723.15px;transform:scaleX(1.0488);">с29р</span>
<svg class="ic" style="left:114.8px;top:754.3px" width="17.9" height="17.9" ><use href="#bx-plus"/></svg>
<div class="hd" style="left:134.35px;top:762.65px;width:5.6px"></div>
<svg class="ic" style="left:141.79px;top:750.03px" width="26.24" height="26.24" ><use href="#i-section"/></svg>
<span id="tr20" class="t tr" style="left:175.05px;top:752.67px;transform:scaleX(1.0536);">Линии разреза</span>
<div class="a" style="left:520.2px;top:153.1px;width:11.5px;height:634px;background:#f4f3f4"></div>
<div class="a" style="left:531.3px;top:153px;width:790px;height:633.8px;background:#a4a4a4"></div>
<div class="a" style="left:532.5px;top:154.2px;width:790px;height:632.6px;box-sizing:border-box;background:#f0f0f0;border:2.1px solid #666;border-right:none;border-bottom:1.6px solid #fdfdfd"></div>
<div class="btn" style="left:549.6px;top:171.3px;width:81.6px;height:48.3px"></div>
<div class="btn" style="left:641.3px;top:171.3px;width:52.4px;height:48.3px"></div>
<div class="btn" style="left:717px;top:171.3px;width:51.8px;height:48.3px"></div>
<div class="btn" style="left:779.2px;top:171.3px;width:52px;height:48.3px"></div>
<svg class="ic" style="left:567.6px;top:183.8px" width="26" height="26" ><use href="#r1"/></svg>
<svg class="ic" style="left:614.8px;top:193.6px" width="12.4" height="7.2"><path d="M0 0H12.4L6.2 7.2Z" fill="#000"/></svg>
<svg class="ic" style="left:656px;top:184px" width="23" height="23" ><use href="#r2"/></svg>
<svg class="ic" style="left:729.3px;top:181.9px" width="27" height="27" ><use href="#r3"/></svg>
<svg class="ic" style="left:793.7px;top:183.7px" width="26" height="26" ><use href="#r4"/></svg>
<div class="a" style="left:547.6px;top:238px;width:780px;height:541.6px;box-sizing:border-box;background:#fff;border:1.5px solid #828282"></div>
<div class="a" style="left:614.7px;top:240px;width:1.4px;height:41px;background:#e2e2e2"></div>
<div class="a" style="left:614.6px;top:280.4px;width:1.7px;height:393.4px;background:#939393"></div>
<div class="a" style="left:713.5px;top:240px;width:1.4px;height:41px;background:#e2e2e2"></div>
<div class="a" style="left:713.5px;top:280.4px;width:1.7px;height:393.4px;background:#939393"></div>
<div class="a" style="left:877.5px;top:240px;width:1.4px;height:41px;background:#e2e2e2"></div>
<div class="a" style="left:877.5px;top:280.4px;width:1.7px;height:393.4px;background:#939393"></div>
<div class="a" style="left:1008.7px;top:240px;width:1.4px;height:41px;background:#e2e2e2"></div>
<div class="a" style="left:1008.6px;top:280.4px;width:1.7px;height:393.4px;background:#939393"></div>
<div class="a" style="left:1172.6px;top:240px;width:1.4px;height:41px;background:#e2e2e2"></div>
<div class="a" style="left:1172.5px;top:280.4px;width:1.7px;height:393.4px;background:#939393"></div>
<span id="h0" class="t tb" style="left:560.0px;top:251.23px;transform:scaleX(1.0304);">№</span>
<span id="h1" class="t tb" style="left:626.2px;top:251.23px;transform:scaleX(1.0567);">Назв...</span>
<span id="h2" class="t tb" style="left:724.2px;top:251.23px;transform:scaleX(1.0758);">Описание</span>
<span id="h3" class="t tb" style="left:888.1px;top:251.23px;transform:scaleX(1.0362);">Основно...</span>
<span id="h4" class="t tb" style="left:1020.1px;top:251.23px;transform:scaleX(1.0558);">Грунт вклю...</span>
<span id="h5" class="t tb" style="left:1183.2px;top:251.23px;transform:scaleX(1.1117);">Геоиндекс</span>
<div class="a" style="left:550.8px;top:280.2px;width:64px;height:392.8px;background:#e7e8ef"></div>
<div class="a" style="left:583.6px;top:312.23px;width:744px;height:1.45px;background:#9a9a9a"></div>
<svg class="ic" style="left:558.6px;top:282.6px" width="26.24" height="26.24" ><use href="#i-diamond"/></svg>
<span id="n0" class="t tb" style="left:587.2px;top:287.13px;transform:scaleX(1.0450);transform:scaleX(0.83);">1</span>
<span id="m0" class="t tb" style="left:620.2px;top:287.13px;transform:scaleX(1.0450);transform:scaleX(0.83);">1</span>
<span id="d0" class="t tb" style="left:719.2px;top:287.13px;transform:scaleX(1.0450);">Слой почвен...</span>
<span id="o0" class="t tb" style="left:883px;top:287.13px;transform:scaleX(1.0450);">Слой поч...</span>
<span id="g0" class="t tb" style="left:1012.8px;top:287.13px;transform:scaleX(1.0680);">Почвенно-ра...</span>
<span id="q0" class="t tb" style="left:1178px;top:287.13px;transform:scaleX(1.0450);">q1</span>
<div class="a" style="left:583.6px;top:344.96px;width:744px;height:1.45px;background:#9a9a9a"></div>
<svg class="ic" style="left:558.6px;top:315.33px" width="26.24" height="26.24" ><use href="#i-diamond"/></svg>
<span id="n1" class="t tb" style="left:587.2px;top:319.86px;transform:scaleX(1.0450);transform:scaleX(0.83);">2</span>
<span id="m1" class="t tb" style="left:620.2px;top:319.86px;transform:scaleX(1.0450);transform:scaleX(0.83);">2</span>
<span id="d1" class="t tb" style="left:719.2px;top:319.86px;transform:scaleX(1.0450);">Насыпные гр...</span>
<span id="o1" class="t tb" style="left:883px;top:319.86px;transform:scaleX(0.9795);">насыпной ...</span>
<span id="g1" class="t tb" style="left:1012.8px;top:319.86px;transform:scaleX(1.0680);">Почвенно-ра...</span>
<span id="q1" class="t tb" style="left:1178px;top:319.86px;transform:scaleX(1.0450);">q2</span>
<div class="a" style="left:583.6px;top:377.69px;width:744px;height:1.45px;background:#9a9a9a"></div>
<svg class="ic" style="left:558.6px;top:348.06px" width="26.24" height="26.24" ><use href="#i-diamond"/></svg>
<span id="n2" class="t tb" style="left:587.2px;top:352.59px;transform:scaleX(1.0450);transform:scaleX(0.83);">3</span>
<span id="m2" class="t tb" style="left:620.2px;top:352.59px;transform:scaleX(1.0450);transform:scaleX(0.83);">3</span>
<span id="d2" class="t tb" style="left:719.2px;top:352.59px;transform:scaleX(1.0450);">Суглинки се...</span>
<span id="o2" class="t tb" style="left:883px;top:352.59px;transform:scaleX(1.0450);">суглинок ...</span>
<span id="g2" class="t tb" style="left:1012.8px;top:352.59px;transform:scaleX(1.0680);">Почвенно-ра...</span>
<span id="q2" class="t tb" style="left:1178px;top:352.59px;transform:scaleX(1.0450);">q3</span>
<div class="a" style="left:583.6px;top:410.42px;width:744px;height:1.45px;background:#9a9a9a"></div>
<svg class="ic" style="left:558.6px;top:380.79px" width="26.24" height="26.24" ><use href="#i-diamond"/></svg>
<span id="n3" class="t tb" style="left:587.2px;top:385.32px;transform:scaleX(1.0450);transform:scaleX(0.83);">4</span>
<span id="m3" class="t tb" style="left:620.2px;top:385.32px;transform:scaleX(1.0450);transform:scaleX(0.83);">4</span>
<span id="d3" class="t tb" style="left:719.2px;top:385.32px;transform:scaleX(1.0450);">Суглинки се...</span>
<span id="o3" class="t tb" style="left:883px;top:385.32px;transform:scaleX(1.0450);">суглинок ...</span>
<span id="g3" class="t tb" style="left:1012.8px;top:385.32px;transform:scaleX(1.0680);">Почвенно-ра...</span>
<span id="q3" class="t tb" style="left:1178px;top:385.32px;transform:scaleX(1.0450);">q4</span>
<div class="a" style="left:583.6px;top:443.15px;width:744px;height:1.45px;background:#9a9a9a"></div>
<svg class="ic" style="left:558.6px;top:413.52px" width="26.24" height="26.24" ><use href="#i-diamond"/></svg>
<span id="n4" class="t tb" style="left:587.2px;top:418.05px;transform:scaleX(1.0450);transform:scaleX(0.83);">5</span>
<span id="m4" class="t tb" style="left:620.2px;top:418.05px;transform:scaleX(1.0450);transform:scaleX(0.83);">5</span>
<span id="d4" class="t tb" style="left:719.2px;top:418.05px;transform:scaleX(1.0450);">Суглинки се...</span>
<span id="o4" class="t tb" style="left:883px;top:418.05px;transform:scaleX(1.0450);">суглинок ...</span>
<span id="g4" class="t tb" style="left:1012.8px;top:418.05px;transform:scaleX(1.0680);">Почвенно-ра...</span>
<span id="q4" class="t tb" style="left:1178px;top:418.05px;transform:scaleX(1.0450);">q5</span>
<div class="a" style="left:583.6px;top:475.88px;width:744px;height:1.45px;background:#9a9a9a"></div>
<svg class="ic" style="left:558.6px;top:446.25px" width="26.24" height="26.24" ><use href="#i-diamond"/></svg>
<span id="n5" class="t tb" style="left:587.2px;top:450.78px;transform:scaleX(1.0450);transform:scaleX(0.83);">6</span>
<span id="m5" class="t tb" style="left:620.2px;top:450.78px;transform:scaleX(1.0450);transform:scaleX(0.83);">6</span>
<span id="d5" class="t tb" style="left:719.2px;top:450.78px;transform:scaleX(1.0450);">Суглинки же...</span>
<span id="o5" class="t tb" style="left:883px;top:450.78px;transform:scaleX(1.0450);">суглинок ...</span>
<span id="g5" class="t tb" style="left:1012.8px;top:450.78px;transform:scaleX(1.0680);">Почвенно-ра...</span>
<span id="q5" class="t tb" style="left:1178px;top:450.78px;transform:scaleX(1.0450);">q6</span>
<div class="a" style="left:583.6px;top:508.61px;width:744px;height:1.45px;background:#9a9a9a"></div>
<svg class="ic" style="left:558.6px;top:478.98px" width="26.24" height="26.24" ><use href="#i-diamond"/></svg>
<span id="n6" class="t tb" style="left:587.2px;top:483.51px;transform:scaleX(1.0450);transform:scaleX(0.83);">7</span>
<span id="m6" class="t tb" style="left:620.2px;top:483.51px;transform:scaleX(1.0450);transform:scaleX(0.83);">7</span>
<span id="d6" class="t tb" style="left:719.2px;top:483.51px;transform:scaleX(1.0168);">Глины серо-ж...</span>
<span id="o6" class="t tb" style="left:883px;top:483.51px;transform:scaleX(1.0450);">глина сер...</span>
<span id="g6" class="t tb" style="left:1012.8px;top:483.51px;transform:scaleX(1.0680);">Почвенно-ра...</span>
<span id="q6" class="t tb" style="left:1178px;top:483.51px;transform:scaleX(1.0450);">q7</span>
<div class="a" style="left:583.6px;top:541.34px;width:744px;height:1.45px;background:#9a9a9a"></div>
<svg class="ic" style="left:558.6px;top:511.71px" width="26.24" height="26.24" ><use href="#i-diamond"/></svg>
<span id="n7" class="t tb" style="left:587.2px;top:516.24px;transform:scaleX(1.0450);transform:scaleX(0.83);">8</span>
<span id="m7" class="t tb" style="left:620.2px;top:516.24px;transform:scaleX(1.0450);transform:scaleX(0.83);">8</span>
<span id="d7" class="t tb" style="left:719.2px;top:516.24px;transform:scaleX(1.0450);">Глины грязн...</span>
<span id="o7" class="t tb" style="left:883px;top:516.24px;transform:scaleX(1.0450);">глина гря...</span>
<span id="g7" class="t tb" style="left:1012.8px;top:516.24px;transform:scaleX(1.0680);">Почвенно-ра...</span>
<span id="q7" class="t tb" style="left:1178px;top:516.24px;transform:scaleX(1.0450);">q8</span>
<div class="a" style="left:583.6px;top:574.07px;width:744px;height:1.45px;background:#9a9a9a"></div>
<svg class="ic" style="left:558.6px;top:544.44px" width="26.24" height="26.24" ><use href="#i-diamond"/></svg>
<span id="n8" class="t tb" style="left:587.2px;top:548.97px;transform:scaleX(1.0450);transform:scaleX(0.83);">9</span>
<span id="m8" class="t tb" style="left:620.2px;top:548.97px;transform:scaleX(1.0450);transform:scaleX(0.83);">9</span>
<span id="d8" class="t tb" style="left:719.2px;top:548.97px;transform:scaleX(1.0234);">Глины жолто-...</span>
<span id="o8" class="t tb" style="left:883px;top:548.97px;transform:scaleX(1.0450);">глина жел...</span>
<span id="g8" class="t tb" style="left:1012.8px;top:548.97px;transform:scaleX(1.0680);">Почвенно-ра...</span>
<span id="q8" class="t tb" style="left:1178px;top:548.97px;transform:scaleX(1.0450);">q9</span>
<div class="a" style="left:583.6px;top:606.80px;width:744px;height:1.45px;background:#9a9a9a"></div>
<svg class="ic" style="left:558.6px;top:577.17px" width="26.24" height="26.24" ><use href="#i-diamond"/></svg>
<span id="n9" class="t tb" style="left:587.2px;top:581.70px;transform:scaleX(1.0450);transform:scaleX(0.9);letter-spacing:0.3px;">10</span>
<span id="m9" class="t tb" style="left:620.2px;top:581.70px;transform:scaleX(1.0450);transform:scaleX(0.9);letter-spacing:0.3px;">10</span>
<span id="d9" class="t tb" style="left:719.2px;top:581.70px;transform:scaleX(1.0368);">Пески серые,...</span>
<span id="o9" class="t tb" style="left:883px;top:581.70px;transform:scaleX(1.0450);">песок сер...</span>
<span id="g9" class="t tb" style="left:1012.8px;top:581.70px;transform:scaleX(1.0680);">Почвенно-ра...</span>
<span id="q9" class="t tb" style="left:1178px;top:581.70px;transform:scaleX(1.0450);">q10</span>
<div class="a" style="left:583.6px;top:639.53px;width:744px;height:1.45px;background:#9a9a9a"></div>
<svg class="ic" style="left:558.6px;top:609.9px" width="26.24" height="26.24" ><use href="#i-diamond"/></svg>
<span id="n10" class="t tb" style="left:587.2px;top:614.43px;transform:scaleX(1.0450);transform:scaleX(0.9);letter-spacing:0.3px;">11</span>
<span id="m10" class="t tb" style="left:620.2px;top:614.43px;transform:scaleX(1.0450);transform:scaleX(0.9);letter-spacing:0.3px;">11</span>
<span id="d10" class="t tb" style="left:719.2px;top:614.43px;transform:scaleX(1.0450);">Известняк с...</span>
<span id="o10" class="t tb" style="left:883px;top:614.43px;transform:scaleX(1.0450);">известня...</span>
<span id="g10" class="t tb" style="left:1012.8px;top:614.43px;transform:scaleX(1.0680);">Почвенно-ра...</span>
<span id="q10" class="t tb" style="left:1178px;top:614.43px;transform:scaleX(1.0450);">q11</span>
<div class="a" style="left:583.6px;top:672.26px;width:744px;height:1.45px;background:#9a9a9a"></div>
<svg class="ic" style="left:558.6px;top:642.63px" width="26.24" height="26.24" ><use href="#i-diamond"/></svg>
<span id="n11" class="t tb" style="left:587.2px;top:647.16px;transform:scaleX(1.0450);transform:scaleX(0.9);letter-spacing:0.3px;">12</span>
<span id="m11" class="t tb" style="left:620.2px;top:647.16px;transform:scaleX(1.0450);transform:scaleX(0.9);letter-spacing:0.3px;">12</span>
<span id="d11" class="t tb" style="left:719.2px;top:647.16px;transform:scaleX(1.0450);">Древсяно-гр...</span>
<span id="o11" class="t tb" style="left:883px;top:647.16px;transform:scaleX(1.0450);">древса</span>
<span id="g11" class="t tb" style="left:1012.8px;top:647.16px;transform:scaleX(1.0680);">Почвенно-ра...</span>
<span id="q11" class="t tb" style="left:1178px;top:647.16px;transform:scaleX(1.0450);">q12</span>
<div class="a" style="left:549.1px;top:745px;width:36px;height:33px;background:#f0f0f0"></div>
<div class="a" style="left:585px;top:745px;width:740px;height:33px;background:#cdcdcd"></div>
<svg class="ic" style="left:560.6px;top:752.6px" width="13" height="16"><path d="M11.4 1.2 L3 8 L11.4 14.8" fill="none" stroke="#555" stroke-width="3.2"/></svg>
<div class="a" style="left:0;top:805.5px;width:1312px;height:24.3px;background:#4d4d4d;overflow:hidden"><div class="a" style="left:0;top:0;width:258.8px;height:30px;background:#808080"></div><div class="a" style="left:504px;top:0;width:1.3px;height:30px;background:#787878"></div><div class="a" style="left:636.2px;top:0;width:1.3px;height:30px;background:#787878"></div><span id="tab0" class="t tab" style="left:14px;top:15.33px;transform:scaleX(1.0609);">Проводник чертежа</span><span id="tab1" class="t tab" style="left:273px;top:15.33px;transform:scaleX(1.0412);">Диспетчер чертежа</span><span id="tab2" class="t tab" style="left:519.6px;top:15.33px;transform:scaleX(0.9632);">Свойства</span></div>
</div>
</body></html>
